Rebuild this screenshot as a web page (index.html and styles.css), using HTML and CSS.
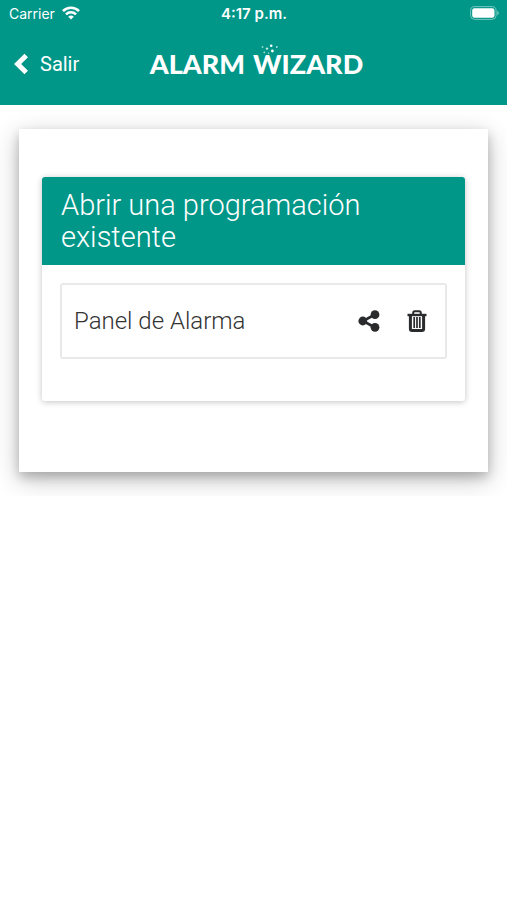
FILE: index.html
```html
<!DOCTYPE html>
<html lang="es">
<head>
<meta charset="utf-8">
<meta name="viewport" content="width=device-width, initial-scale=1">
<title>Alarm Wizard</title>
<link rel="stylesheet" href="styles.css">
</head>
<body>
<header class="top">
  <div class="status">
    <div class="carrier">
      <span>Carrier</span>
      <svg width="18" height="14" viewBox="0 0 18 14" fill="none" stroke="currentColor" stroke-width="2.6" aria-hidden="true">
        <path d="M1 5.1a11.4 11.4 0 0 1 16 0"/>
        <path d="M4 8.3a7.1 7.1 0 0 1 10 0"/>
        <path d="M9 13.6 6.2 10.8a4 4 0 0 1 5.6 0z" fill="currentColor" stroke="none"/>
      </svg>
    </div>
    <time class="clock">4:17 p.m.</time>
    <svg class="battery" width="29" height="14" viewBox="0 0 29 14" aria-hidden="true">
      <rect x=".6" y=".6" width="25.5" height="12.8" rx="4" fill="none" stroke="#fff" stroke-opacity=".45"/>
      <rect x="2.2" y="2.2" width="22.3" height="9.6" rx="2.2" fill="#fff"/>
      <path d="M27.3 4.6q3 2.4 0 4.8z" fill="#fff" fill-opacity=".5"/>
    </svg>
  </div>
  <nav class="bar">
    <a class="back" href="#">
      <svg width="14" height="22" viewBox="0 0 14 22" fill="none" stroke="currentColor" stroke-width="5" aria-hidden="true"><path d="M12.2 2.4 3.6 11l8.6 8.6"/></svg>
      <span>Salir</span>
    </a>
    <div class="logo">
      <span>ALARM</span>
      <span class="wizard">WIZARD
        <svg class="sparks" width="18" height="11" viewBox="0 0 18 11" fill="#fff" aria-hidden="true">
          <circle cx="1.5" cy="3" r=".9" opacity=".6"/><circle cx="6" cy="4.6" r="1.2" opacity=".8"/><circle cx="10.2" cy="1.8" r="1.3"/>
          <circle cx="15.8" cy="3" r=".9" opacity=".7"/><circle cx="11.4" cy="7" r="1.4"/><circle cx="3.3" cy="8.3" r=".9" opacity=".7"/><circle cx="7.5" cy="9.3" r=".8" opacity=".6"/>
        </svg>
      </span>
    </div>
  </nav>
</header>
<main class="sheet">
  <section class="card">
    <h1 class="title">Abrir una programación existente</h1>
    <ul class="list">
      <li class="item">
        <a class="name" href="#">Panel de Alarma</a>
        <button class="icon" type="button" aria-label="Compartir">
          <svg width="22" height="22" viewBox="0 0 22 22" fill="currentColor" aria-hidden="true">
            <path d="M17 4.5 5 11l12 6.5" fill="none" stroke="currentColor" stroke-width="2.6"/>
            <circle cx="4.8" cy="11" r="4.4"/><circle cx="17" cy="4.7" r="4.4"/><circle cx="17" cy="17.3" r="4.4"/>
          </svg>
        </button>
        <button class="icon" type="button" aria-label="Eliminar">
          <svg width="20" height="22" viewBox="0 0 20 22" fill="none" stroke="currentColor" aria-hidden="true">
            <path d="M.5 5h19" stroke-width="2.4"/>
            <path d="M6.2 4.5V2.8q0-1.6 1.6-1.6h4.4q1.6 0 1.6 1.6v1.7" stroke-width="2"/>
            <path d="M3.4 5.5v13.2q0 1.7 1.7 1.7h9.8q1.7 0 1.7-1.7V5.5" stroke-width="3"/>
            <path d="M7.2 7v11M10 7v11M12.8 7v11" stroke-width="1.7"/>
          </svg>
        </button>
      </li>
    </ul>
  </section>
</main>
</body>
</html>
```
FILE: styles.css
```css
* {
  box-sizing: border-box;
}

body {
  margin: 0;
  background: #fff;
  color: #333;
  font-family: Roboto, "Liberation Sans", sans-serif;
}

.top {
  background: #009688;
  color: #fff;
}

.status {
  display: grid;
  grid-template-columns: 1fr auto 1fr;
  align-items: center;
  height: 26px;
  padding: 0 8px 0 9px;
  font: 14px Inter, sans-serif;
}

.carrier {
  display: flex;
  align-items: center;
  gap: 7px;
}

.clock {
  font-size: 15px;
  font-weight: 600;
}

.battery {
  justify-self: end;
}

.bar {
  display: grid;
  grid-template-columns: 1fr auto 1fr;
  align-items: center;
  padding: 18px 8px 21px 14px;
}

.back {
  display: flex;
  align-items: center;
  gap: 12px;
  color: #fff;
  font-size: 20px;
  text-decoration: none;
}

.logo {
  display: flex;
  gap: 8px;
  font: 900 27px/40px Lato, sans-serif;
}

.wizard {
  position: relative;
}

.sparks {
  position: absolute;
  top: 0;
  left: 8px;
}

.sheet {
  margin: 24px 19px;
  padding: 48px 23px 71px;
  background: #fff;
  box-shadow: 0 5px 10px rgba(0, 0, 0, .2), 0 7px 24px rgba(0, 0, 0, .24);
}

.card {
  border-radius: 3px;
  background: #fff;
  box-shadow: 0 1px 6px rgba(0, 0, 0, .24);
}

.title {
  margin: 0;
  padding: 12px 19px;
  border-radius: 3px 3px 0 0;
  background: #009688;
  color: #fff;
  font-size: 29px;
  font-weight: 300;
  line-height: 32px;
}

.list {
  margin: 0;
  padding: 18px 18px 42px;
  list-style: none;
}

.item {
  display: flex;
  align-items: center;
  gap: 27px;
  height: 76px;
  padding: 0 18px 0 12px;
  border: 2px solid #e9e9e9;
  border-radius: 3px;
}

.name {
  flex: 1;
  color: #333;
  font-size: 24px;
  font-weight: 300;
  text-decoration: none;
}

.icon {
  display: flex;
  padding: 0;
  border: 0;
  background: none;
  color: #292b2c;
}
```
